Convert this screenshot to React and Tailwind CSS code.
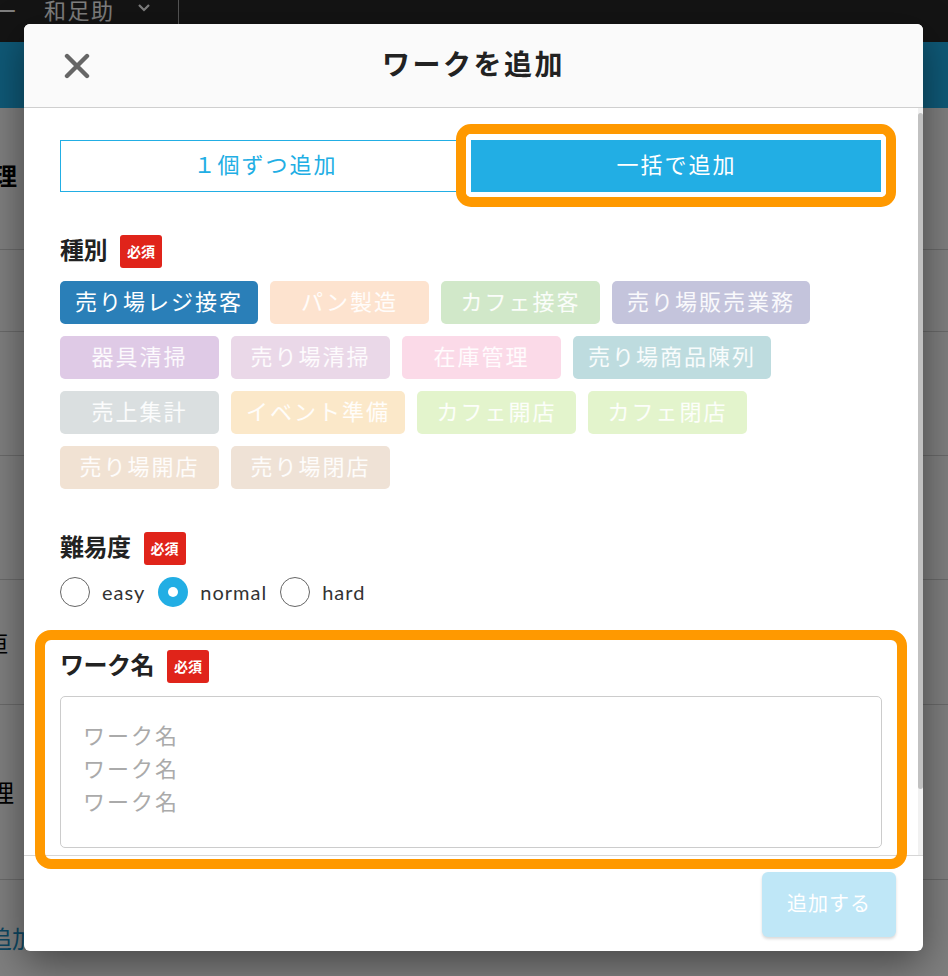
import React from "react";

const tags = [
  { t: "売り場レジ接客", bg: "bg-[#2a7fb8]", sel: true },
  { t: "パン製造", bg: "bg-[#fde3cf]" },
  { t: "カフェ接客", bg: "bg-[#d1e8c9]" },
  { t: "売り場販売業務", bg: "bg-[#c4c4dc]" },
  { t: "器具清掃", bg: "bg-[#dfcae6]" },
  { t: "売り場清掃", bg: "bg-[#ead8e8]" },
  { t: "在庫管理", bg: "bg-[#fbdae8]" },
  { t: "売り場商品陳列", bg: "bg-[#bedcdf]" },
  { t: "売上集計", bg: "bg-[#dadfe0]" },
  { t: "イベント準備", bg: "bg-[#fbe8c9]" },
  { t: "カフェ開店", bg: "bg-[#e3f4cc]" },
  { t: "カフェ閉店", bg: "bg-[#e3f4cc]" },
  { t: "売り場開店", bg: "bg-[#f1e2d3]" },
  { t: "売り場閉店", bg: "bg-[#efe2d6]" },
];

function Badge() {
  return (
    <span className="ml-[13px] inline-flex h-[33px] w-[42px] items-center justify-center rounded-[3px] bg-[#e0241a] pb-[2px] text-[14px] font-bold leading-none text-white">
      必須
    </span>
  );
}

function Label({ children }) {
  return (
    <div className="flex h-[33px] items-center">
      <span className="mb-[6px] text-[24px] font-bold leading-none tracking-[-0.5px] text-[#222]">{children}</span>
      <Badge />
    </div>
  );
}

function Radio({ checked, label }) {
  return (
    <div className="flex items-center">
      {checked ? (
        <span className="flex h-[30px] w-[30px] items-center justify-center rounded-full bg-[#22aee4]">
          <span className="h-[10px] w-[10px] rounded-full bg-white" />
        </span>
      ) : (
        <span className="h-[30px] w-[30px] rounded-full border border-[#666] bg-white" />
      )}
      <span className="ml-[12px] mr-[13px] font-['Lato',sans-serif] text-[20px] tracking-[1px] text-[#333]">
        {label}
      </span>
    </div>
  );
}

export default function App() {
  return (
    <div className="relative h-[976px] w-[948px] overflow-hidden bg-white font-['Noto_Sans_CJK_JP',sans-serif]">
      {/* background page */}
      <div className="flex h-[42px] items-center overflow-hidden bg-[#282828] text-[22px] text-white">
        <span className="mb-[24px] ml-[-5px]">ー</span>
        <span className="mb-[24px] ml-[27px] tracking-[1.5px]">和足助</span>
        <svg className="mb-[26px] ml-[22px]" width="14" height="10" viewBox="0 0 14 10">
          <path d="M2 2 L7 7 L12 2" fill="none" stroke="white" strokeWidth="2.2" />
        </svg>
        <div className="ml-[27px] h-full w-px bg-[#aaa]" />
      </div>
      <div className="h-[66px] bg-[#1fb2ee]" />
      <div className="flex h-[142px] items-center border-b border-[#d4d4d4]">
        <span className="mb-[8px] ml-[-7px] text-[24px] font-bold text-black">理</span>
      </div>
      <div className="h-[82px] border-b border-[#d4d4d4]" />
      <div className="h-[124px] border-b border-[#d4d4d4]" />
      <div className="h-[124px] border-b border-[#d4d4d4]" />
      <div className="flex h-[125px] items-center border-b border-[#d4d4d4]">
        <span className="ml-[-14px] text-[22px] text-black">垣</span>
      </div>
      <div className="flex h-[175px] items-center border-b border-[#d4d4d4]">
        <span className="ml-[-10px] text-[24px] text-black">理</span>
      </div>
      <div className="flex h-[96px] items-center">
        <span className="ml-[-12px] mt-[20px] text-[24px] text-[#1a8ec5]">追加</span>
      </div>

      {/* dim overlay */}
      <div className="absolute inset-0 bg-black/50" />

      {/* modal */}
      <div className="absolute left-[24px] top-[24px] flex h-[927px] w-[899px] flex-col overflow-hidden rounded-[6px] bg-white shadow-[0_12px_40px_rgba(0,0,0,0.45)]">
        <div className="relative flex h-[84px] shrink-0 items-center justify-center border-b border-[#cfcfcf] bg-[#fafafa]">
          <svg className="absolute left-[40px] top-[29px]" width="26" height="26" viewBox="0 0 26 26">
            <path d="M3 3 L23 23 M23 3 L3 23" stroke="#666" strokeWidth="4.4" strokeLinecap="round" />
          </svg>
          <span className="pb-[6px] text-[28px] font-bold tracking-[2.5px] text-[#222]">ワークを追加</span>
        </div>

        <div className="relative min-h-0 flex-1 overflow-hidden">
          <div className="pb-[85px] pl-[36px] pr-[41px] pt-[32px]">
            <div className="flex h-[52px]">
              <div className="flex w-1/2 items-center justify-center border border-[#22aee4] pb-[6px] text-[22px] tracking-[2px] text-[#22aee4]">
                １個ずつ追加
              </div>
              <div className="flex w-1/2 items-center justify-center bg-[#22aee4] pb-[6px] text-[22px] tracking-[2px] text-white">
                一括で追加
              </div>
            </div>

            <div className="mt-[43px]">
              <Label>種別</Label>
            </div>
            <div className="mt-[13px] flex flex-wrap gap-[12px]">
              {tags.map((g) => (
                <div
                  key={g.t}
                  className={`flex h-[43px] min-w-[159px] items-center justify-center rounded-[5px] px-[15px] pb-[5px] text-[22px] tracking-[2px] ${g.bg} ${g.sel ? "text-white" : "text-white/90"}`}
                >
                  {g.t}
                </div>
              ))}
            </div>

            <div className="mt-[43px]">
              <Label>難易度</Label>
            </div>
            <div className="mt-[12px] flex items-center">
              <Radio label="easy" />
              <Radio label="normal" checked />
              <Radio label="hard" />
            </div>

            <div className="mt-[43px]">
              <Label>ワーク名</Label>
            </div>
            <textarea
              className="mt-[13px] block h-[152px] w-full resize-none rounded-[5px] border border-[#cccccc] px-[22px] pb-[24px] pt-[21px] text-[22px] leading-[33px] tracking-[2px] outline-none placeholder:text-[#aaaaaa]"
              placeholder={"ワーク名\nワーク名\nワーク名"}
            />
          </div>
          {/* scrollbar */}
          <div className="absolute bottom-0 right-0 top-0 w-[5px] bg-[#f1f1f1]">
            <div className="mt-[5px] h-[676px] w-full rounded-full bg-[#c1c1c1]" />
          </div>
        </div>

        <div className="flex h-[96px] shrink-0 items-start justify-end border-t border-[#d6d6d6] pr-[27px] pt-[16px]">
          <div className="flex h-[65px] w-[134px] items-center justify-center rounded-[6px] bg-[#bfe7f7] pb-[4px] text-[20px] tracking-[1px] text-white shadow-[0_2px_3px_rgba(0,0,0,0.15)]">
            追加する
          </div>
        </div>
      </div>

      {/* annotation highlights */}
      <div className="absolute left-[456px] top-[124px] h-[83px] w-[440px] rounded-[15px] border-[10px] border-[#ff9900]">
        <div className="absolute inset-0 rounded-[5px] border-[5px] border-white" />
      </div>
      <div className="absolute left-[35px] top-[630px] h-[239px] w-[872px] rounded-[16px] border-[10px] border-[#ff9900]" />
    </div>
  );
}
